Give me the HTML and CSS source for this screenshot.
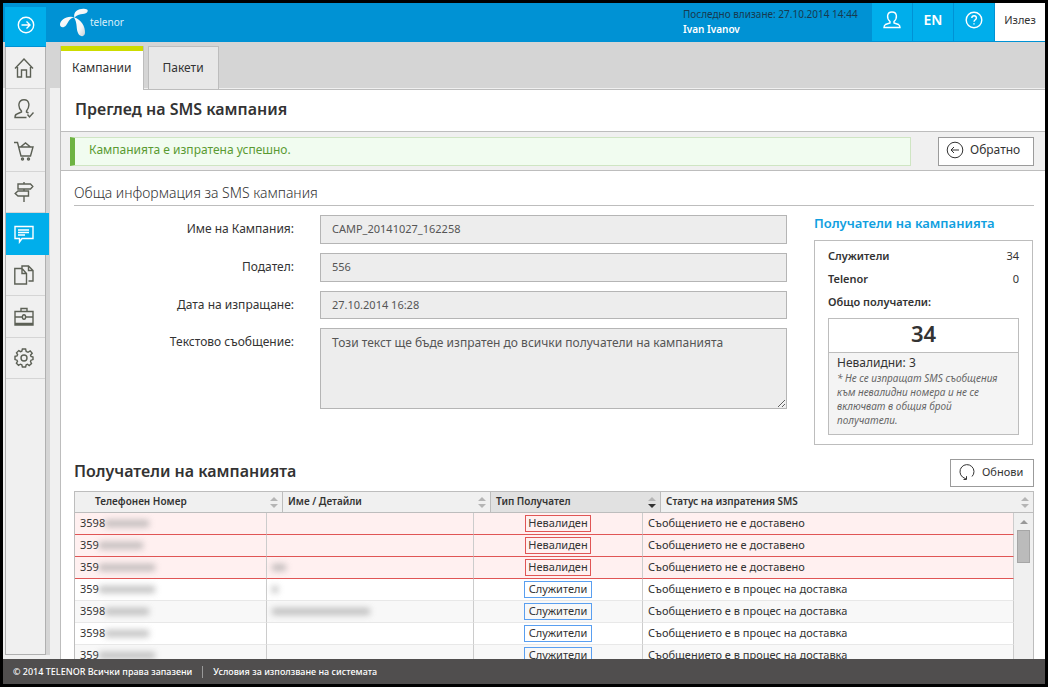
FILE: index.html
```html
<!DOCTYPE html>
<html lang="bg">
<head>
    <meta charset="UTF-8">
    <meta name="viewport" content="width=device-width, initial-scale=1.0">
    <title>Преглед на SMS кампания</title>
    <link rel="stylesheet" href="styles.css">
</head>
<body>

    <header class="header">
        <a href="#" class="logo">
            <svg width="30" height="30" viewBox="0 0 30 30">
                <defs>
                    <linearGradient id="blade" x1="0" y1="0" x2="1" y2="1">
                        <stop offset="0" stop-color="#ffffff"/>
                        <stop offset="0.6" stop-color="#f2f5f7"/>
                        <stop offset="1" stop-color="#c3ced6"/>
                    </linearGradient>
                </defs>
                <path fill="url(#blade)" d="M14.500 10C12.500 3.500 19 .5 24 .8C28 1 28.500 3 27 4.500C24.500 7 17 5 14.500 10Z"/>
                <path fill="url(#blade)" d="M14.500 9.200C7 7 0 12 0 16.500C0 20 4 20 6 17.500C8.500 14 9 10.500 14.500 9.200Z"/>
                <path fill="url(#blade)" d="M14 9.500C21 11 25.600 19 25 25C24.500 29 20.500 29 18.500 26C15.500 21 18 16 14 9.500Z"/>
            </svg>
            <span>telenor</span>
        </a>
        <div class="login-info">
            <div>Последно влизане: 27.10.2014 14:44</div>
            <strong>Ivan Ivanov</strong>
        </div>
        <nav class="top-nav">
            <button type="button" aria-label="Профил">
                <svg width="18" height="18" viewBox="0 0 18 18"><path d="M7 12V10.500C3.500 7.500 3.500 1 9 1S14.500 7.500 11 10.500V12L15.500 13.500Q17 14.500 17 16.500H1Q1 14.500 2.500 13.500Z"/></svg>
            </button>
            <button type="button">EN</button>
            <button type="button" aria-label="Помощ">
                <svg width="18" height="18" viewBox="0 0 18 18"><circle cx="9" cy="9" r="7.800"/><path d="M6.800 7C6.800 4 11.400 4 11.400 7C11.400 8.700 9 8.700 9 10.700M9 12.200V13.500"/></svg>
            </button>
            <a href="#" class="exit">Излез</a>
        </nav>
    </header>

    <div class="layout">
        <aside class="sidebar">
            <button type="button" class="toggle" aria-label="Меню">
                <svg width="18" height="18" viewBox="0 0 18 18"><circle cx="9" cy="9" r="7.700"/><path d="M4.500 9H13M9.500 5.500L13 9L9.500 12.500"/></svg>
            </button>
            <ul class="menu">
                <li><a href="#" aria-label="Начало"><svg width="20" height="20" viewBox="0 0 20 20"><path d="M1 10.500L10 1L19 10.500M3.500 9V19H7.500V12H12.500V19H16.500V9"/></svg></a></li>
                <li><a href="#" aria-label="Служители"><svg width="20" height="20" viewBox="0 0 20 20"><path d="M12.500 18.500H1Q1 15.500 3 15L7.500 13V12C3.500 8 4 .8 10 .8S16 8 12.500 12V13L14.500 14M13.500 15.500L15.500 18L19.500 13.500"/></svg></a></li>
                <li><a href="#" aria-label="Магазин"><svg width="20" height="20" viewBox="0 0 20 20"><path d="M0 1.500H3.500L7 15H16.500L19 6H5M6.500 6L11.500 2L16.500 6"/><circle cx="8.500" cy="18" r="1"/><circle cx="14.500" cy="18" r="1"/></svg></a></li>
                <li><a href="#" aria-label="Посоки"><svg width="20" height="20" viewBox="0 0 20 20"><path d="M10 0V2M4 2H16.500L18.800 4.500L16.500 7H4ZM10 7V9M14.500 9H4L1.200 11.500L4 14H14.500ZM10 14V20"/></svg></a></li>
                <li class="active"><a href="#" aria-label="Кампании"><svg width="20" height="20" viewBox="0 0 20 20"><path d="M1 2.500H19V14.500H8L5.500 18V14.500H1ZM4 6H15M4 8.500H15M4 11H11"/></svg></a></li>
                <li><a href="#" aria-label="Документи"><svg width="20" height="20" viewBox="0 0 20 20"><path d="M.8 3.500H8L12.500 8.500V19H.8ZM8 3.500V8.500H12.500M8 3.500V1H14.500L19 5.500V16H14.500M14.500 1V5.500H19"/></svg></a></li>
                <li><a href="#" aria-label="Услуги"><svg width="20" height="20" viewBox="0 0 20 20"><path d="M1 4.500H19V18H1ZM7 4.500V1.500H13V4.500M1 10H8M12 10H19M1 16.500H19"/><ellipse cx="10" cy="10" rx="1.600" ry="2.200"/></svg></a></li>
                <li><a href="#" aria-label="Настройки"><svg width="20" height="20" viewBox="0 0 20 20"><path d="M8.400 1H11.600L12.200 3.500L14 4.300L16.200 2.900L18.200 5.200L16.500 7.200L17 8.400L19 9V11.600L17 12.200L16.500 13.500L17.500 15.500L15.200 17.500L13.500 16.200L12.200 16.800L11.600 19H8.400L7.800 16.800L6.400 16.200L4.500 17.300L2.400 15.200L3.500 13.500L3 12.200L1 11.600V8.400L3 8L3.600 6.500L2.500 4.800L4.800 2.600L6.500 3.700L7.800 3.200Z"/><circle cx="10" cy="10" r="3"/></svg></a></li>
            </ul>
        </aside>

        <main class="main">
            <nav class="tabs">
                <a href="#" class="tab current">Кампании</a>
                <a href="#" class="tab">Пакети</a>
            </nav>

            <div class="page">
                <h1>Преглед на SMS кампания</h1>

                <div class="notice-bar">
                    <div class="notice">Кампанията е изпратена успешно.</div>
                    <button type="button" class="btn">
                        <svg width="18" height="18" viewBox="0 0 18 18"><circle cx="9" cy="9" r="7.800"/><path d="M13 9H5M8 6L5 9L8 12"/></svg>
                        Обратно
                    </button>
                </div>

                <div class="content">
                    <h2 class="section-title">Обща информация за SMS кампания</h2>

                    <div class="info">
                        <form class="campaign">
                            <label for="name">Име на Кампания:</label>
                            <input type="text" id="name" value="CAMP_20141027_162258" readonly>

                            <label for="sender">Подател:</label>
                            <input type="text" id="sender" value="556" readonly>

                            <label for="date">Дата на изпращане:</label>
                            <input type="text" id="date" value="27.10.2014 16:28" readonly>

                            <label for="text">Текстово съобщение:</label>
                            <textarea id="text" readonly>Този текст ще бъде изпратен до всички получатели на кампанията</textarea>
                        </form>

                        <section class="summary">
                            <h3>Получатели на кампанията</h3>
                            <div class="summary-box">
                                <div class="line"><strong>Служители</strong><span>34</span></div>
                                <div class="line"><strong>Telenor</strong><span>0</span></div>
                                <div class="line"><strong>Общо получатели:</strong></div>
                                <div class="total">
                                    <div class="total-number">34</div>
                                    <div class="invalid">
                                        <p>Невалидни: 3</p>
                                        <em>* Не се изпращат SMS съобщения към невалидни номера и не се включват в общия брой получатели.</em>
                                    </div>
                                </div>
                            </div>
                        </section>
                    </div>

                    <div class="list-head">
                        <h2>Получатели на кампанията</h2>
                        <button type="button" class="btn refresh">
                            <svg width="18" height="18" viewBox="0 0 18 18"><path d="M4.500 14A7 7 0 1 1 14 13.500M4.500 14L8 16M8.500 13.200V16.500H5.500"/></svg>
                            Обнови
                        </button>
                    </div>

                    <table class="grid grid-head">
                        <thead>
                            <tr>
                                <th class="phone">Телефонен Номер<i class="sort"></i></th>
                                <th class="details">Име / Детайли<i class="sort"></i></th>
                                <th class="type sorted">Тип Получател<i class="sort"></i></th>
                                <th>Статус на изпратения SMS<i class="sort"></i></th>
                            </tr>
                        </thead>
                    </table>
                    <div class="grid-scroll">
                        <table class="grid grid-body">
                            <tbody>
                                <tr class="bad"><td class="phone">3598<i class="smudge"></i></td><td class="details"></td><td class="type"><span>Невалиден</span></td><td>Съобщението не е доставено</td></tr>
                                <tr class="bad"><td class="phone">359<i class="smudge"></i></td><td class="details"></td><td class="type"><span>Невалиден</span></td><td>Съобщението не е доставено</td></tr>
                                <tr class="bad"><td class="phone">359<i class="smudge long"></i></td><td class="details"><i class="smudge tiny"></i></td><td class="type"><span>Невалиден</span></td><td>Съобщението не е доставено</td></tr>
                                <tr><td class="phone">359<i class="smudge long"></i></td><td class="details"><i class="smudge dot"></i></td><td class="type"><span>Служители</span></td><td>Съобщението е в процес на доставка</td></tr>
                                <tr><td class="phone">3598<i class="smudge"></i></td><td class="details"><i class="smudge name"></i></td><td class="type"><span>Служители</span></td><td>Съобщението е в процес на доставка</td></tr>
                                <tr><td class="phone">3598<i class="smudge"></i></td><td class="details"></td><td class="type"><span>Служители</span></td><td>Съобщението е в процес на доставка</td></tr>
                                <tr><td class="phone">359<i class="smudge long"></i></td><td class="details"></td><td class="type"><span>Служители</span></td><td>Съобщението е в процес на доставка</td></tr>
                            </tbody>
                        </table>
                        <div class="scrollbar">
                            <div class="arrow"></div>
                            <div class="thumb"></div>
                        </div>
                    </div>
                </div>
            </div>
        </main>
    </div>

    <footer class="footer">
        <span>© 2014 TELENOR Всички права запазени</span>
        <a href="#">Условия за използване на системата</a>
    </footer>

</body>
</html>
```
FILE: styles.css
```css
* {
    box-sizing: border-box;
}

body {
    display: flex;
    flex-direction: column;
    height: 100vh;
    margin: 0;
    border: 3px solid #000;
    overflow: hidden;
    font-family: "Noto Sans", sans-serif;
    font-size: 11px;
    line-height: 16px;
    color: #333;
    background: #f0f0f0;
}

h1, h2, h3, p, ul {
    margin: 0;
    padding: 0;
}

a {
    color: inherit;
    text-decoration: none;
}

button, input, textarea {
    font: inherit;
    color: inherit;
}

button {
    padding: 0;
    border: 0;
    cursor: pointer;
}

svg {
    display: block;
    fill: none;
    stroke: currentColor;
    stroke-width: 1.4px;
}

/* header */
.header {
    display: flex;
    flex: none;
    height: 39px;
    background: #0092d4;
}

.logo {
    display: flex;
    align-items: center;
    margin-left: 57px;
    padding-bottom: 2px;
    font-size: 10px;
    color: #d9effa;
}

.logo svg {
    margin-top: 3px;
    stroke: none;
}

.login-info {
    width: 189px;
    margin-left: auto;
    padding-top: 4px;
    font-size: 10px;
    line-height: 15px;
    white-space: nowrap;
    color: #173a50;
}

.login-info strong {
    display: block;
    font-weight: 600;
    color: #fff;
}

.top-nav {
    display: flex;
    height: 38px;
    gap: 1px;
}

.top-nav button,
.top-nav .exit {
    display: flex;
    align-items: center;
    justify-content: center;
    width: 40px;
    padding-bottom: 4px;
    font-size: 14px;
    font-weight: 600;
    color: #fff;
    background: #00aeeb;
}

.top-nav .exit {
    width: 50px;
    font-size: 11px;
    font-weight: 400;
    color: #333;
    background: #fff;
}

/* sidebar */
.layout {
    display: flex;
    flex: 1;
    min-height: 0;
    background: linear-gradient(#d5d5d5 46px, #f0f0f0 46px);
}

.sidebar {
    position: relative;
    flex: none;
    width: 41px;
    margin: -35px 0 4px 2px;
    border: 1px solid #b0b0b0;
    border-top: 0;
    background: #f0f0f0;
}

/* shadow strip, starts below the header */
.sidebar::after {
    content: "";
    position: absolute;
    top: 35px;
    bottom: -1px;
    left: 40px;
    width: 4px;
    background: #d5d5d5;
}

.toggle {
    display: flex;
    align-items: center;
    justify-content: center;
    width: 41px;
    height: 40px;
    margin-left: -1px;
    padding-bottom: 3px;
    border-bottom: 1px solid #0092d4;
    color: #fff;
    background: #00aeeb;
}

.menu {
    list-style: none;
}

.menu li {
    height: 41px;
    border-bottom: 1px solid #d5d5d5;
}

.menu li:nth-child(odd) {
    height: 42px;
}

.menu a {
    display: flex;
    align-items: center;
    height: 100%;
    padding-left: 8px;
    color: #5c6055;
}

.menu .active {
    position: relative;
    z-index: 1;
    width: 43px;
    border-color: #00aeeb;
    background: #00aeeb;
}

.menu .active a {
    color: #fff;
}

/* tabs */
.main {
    display: flex;
    flex: 1;
    flex-direction: column;
    min-width: 0;
    margin-left: 14px;
}

.tabs {
    display: flex;
    flex: none;
    gap: 4px;
    padding-top: 4px;
}

.tab {
    height: 43px;
    padding: 13px 14px;
    border: 1px solid #bdbdbd;
    border-bottom: 0;
    font-size: 12px;
    background: #e8e8e8;
}

.tab.current {
    z-index: 1;
    height: 44px;
    margin-bottom: -1px;
    padding: 14px 11px;
    border-top: 0;
    box-shadow: inset 0 5px #cddc00;
    background: #fff;
}

/* page */
.page {
    flex: 1;
    min-height: 0;
    border-top: 1px solid #bdbdbd;
    border-left: 1px solid #bdbdbd;
    overflow: hidden;
    background: #fff;
}

h1 {
    height: 41px;
    padding-left: 14px;
    font-size: 16px;
    font-weight: 600;
    line-height: 38px;
}

.notice-bar {
    display: flex;
    justify-content: space-between;
    gap: 27px;
    padding: 5px 11px 4px 9px;
    border: 1px solid #bdbdbd;
    border-width: 1px 0;
    background: #f0f0f0;
}

.notice {
    flex: 1;
    height: 29px;
    padding: 4px 14px;
    border: 1px solid #cfe5c3;
    border-left: 5px solid #6fb344;
    font-size: 12px;
    color: #5a9a32;
    background: #f1fcf0;
}

.btn {
    display: flex;
    align-items: center;
    gap: 6px;
    width: 96px;
    height: 29px;
    padding: 0 0 4px 7px;
    border: 1px solid #9b9b9b;
    font-size: 12px;
    background: #fff;
}

.btn svg {
    stroke-width: 1px;
}

.btn.refresh {
    width: 84px;
    height: 28px;
    padding-bottom: 2px;
    font-size: 11px;
}

.content {
    padding: 12px 11px 0 13px;
}

.section-title {
    height: 23px;
    border-bottom: 1px solid #bdbdbd;
    font-size: 14px;
    font-weight: 300;
    line-height: 20px;
}

.info {
    display: flex;
    justify-content: space-between;
    gap: 27px;
    padding: 9px 1px 0 0;
}

.campaign {
    display: grid;
    flex: 1;
    grid-template-columns: 220px 1fr;
    grid-template-rows: 29px 29px 28px 81px;
    gap: 9px 26px;
    align-content: start;
}

.campaign label {
    padding-top: 6px;
    font-size: 12px;
    text-align: right;
}

.campaign input,
.campaign textarea {
    width: 100%;
    height: 100%;
    padding: 0 11px 2px;
    border: 1px solid #b5b5b5;
    border-radius: 0;
    outline: 0;
    color: #555;
    background: #ededed;
}

.campaign textarea {
    padding-top: 6px;
    font-size: 12px;
    resize: both;
}

/* summary box */
.summary {
    flex: none;
    width: 219px;
}

.summary h3 {
    height: 25px;
    font-size: 13px;
    font-weight: 600;
    color: #109fdf;
}

.summary-box {
    padding: 3px 13px 9px;
    border: 1px solid #bdbdbd;
}

.line {
    display: flex;
    justify-content: space-between;
    height: 23px;
    line-height: 23px;
}

.line strong {
    font-weight: 600;
}

.total {
    margin-top: 5px;
    border: 1px solid #bdbdbd;
    background: #f4f4f4;
}

.total-number {
    height: 34px;
    border-bottom: 1px solid #bdbdbd;
    font-size: 22px;
    font-weight: 600;
    line-height: 28px;
    text-align: center;
    background: #fff;
}

.invalid {
    padding: 2px 8px 7px;
    font-size: 12px;
}

.invalid em {
    display: block;
    font-size: 10px;
    line-height: 14px;
    color: #666;
}

/* recipients */
.list-head {
    display: flex;
    justify-content: space-between;
    height: 46px;
    padding-top: 14px;
}

.list-head h2 {
    font-size: 16px;
    font-weight: 600;
    line-height: 24px;
}

.grid {
    width: 100%;
    border-collapse: separate;
    border-spacing: 0;
    table-layout: fixed;
}

.grid th {
    position: relative;
    height: 22px;
    padding: 0 5px 3px;
    border: 1px solid #bdbdbd;
    border-left: 0;
    font-size: 10px;
    font-weight: 600;
    line-height: 16px;
    text-align: left;
    background: #f0f0f0;
}

.grid th:first-child {
    padding-left: 20px;
    border-left: 1px solid #bdbdbd;
}

.grid th.sorted {
    background: #e1e1e1;
}

.grid-head .phone {
    width: 209px;
}

.grid-head .details {
    width: 208px;
}

.grid-head .type {
    width: 170px;
}

.sort {
    position: absolute;
    top: 5px;
    right: 4px;
}

.sort::before,
.sort::after {
    content: "";
    display: block;
    border: 4px solid transparent;
    border-top: 0;
    border-bottom-color: #b5b5b5;
}

.sort::after {
    margin-top: 3px;
    border-top: 4px solid #b5b5b5;
    border-bottom: 0;
}

.sorted .sort::after {
    border-top-color: #333;
}

.grid-scroll {
    display: flex;
    border: 1px solid #bdbdbd;
    border-width: 0 1px;
}

.grid td {
    height: 22px;
    padding: 0 5px 2px;
    border-right: 1px solid #ccc;
    border-bottom: 1px solid #e8e8e8;
    white-space: nowrap;
}

.grid-body .phone {
    width: 192px;
}

.grid-body .details {
    width: 207px;
}

.grid-body .type {
    width: 169px;
    padding-bottom: 0;
    text-align: center;
}

.grid-body tr:nth-child(odd) td {
    background: #f8f8f8;
}

.grid-body tr.bad td {
    border-bottom: 1px solid #e05555;
    background: #fff0f0;
}

.grid-body .type span {
    display: inline-block;
    width: 68px;
    height: 17px;
    border: 1px solid #5a9ff0;
    line-height: 14px;
    vertical-align: middle;
}

.grid-body .bad .type span {
    width: 66px;
    border-color: #e05555;
}

/* hidden personal data */
.smudge {
    display: inline-block;
    width: 44px;
    height: 7px;
    background: #999;
    filter: blur(3px);
    opacity: 0.6;
}

.smudge.long {
    width: 56px;
}

.smudge.tiny {
    width: 14px;
}

.smudge.dot {
    width: 6px;
}

.smudge.name {
    width: 98px;
}

.scrollbar {
    flex: none;
    width: 19px;
    padding: 7px 3px 0;
    background: #f0f0f0;
}

.arrow {
    width: 0;
    margin: 0 auto;
    border: 4px solid transparent;
    border-top: 0;
    border-bottom-color: #999;
}

.thumb {
    height: 33px;
    margin-top: 6px;
    border: 1px solid #a6a6a6;
    background: #bbb;
}

/* footer */
.footer {
    display: flex;
    flex: none;
    align-items: center;
    height: 25px;
    padding-left: 10px;
    font-size: 9px;
    font-weight: 500;
    color: #fff;
    background: #504e4e;
}

.footer a {
    margin-left: 10px;
    padding-left: 10px;
    border-left: 1px solid #999;
    line-height: 12px;
}
```
